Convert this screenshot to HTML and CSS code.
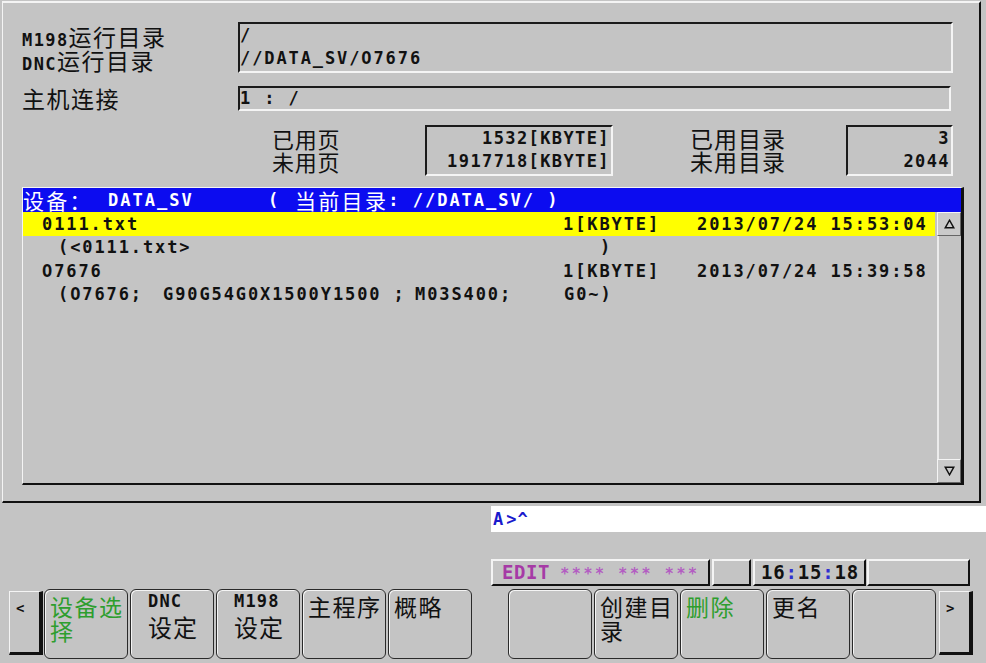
FILE: index.html
```html
<!DOCTYPE html>
<html lang="zh-CN">
<head>
  <meta charset="UTF-8">
  <meta name="viewport" content="width=device-width, initial-scale=1.0">
  <title>程序目录 - 设备选择</title>
  <link rel="stylesheet" href="styles.css">
</head>
<body>
  <div class="screen">
    <div class="main-panel">
      <!-- 运行目录 -->
      <div class="dir-row dir-row-tall">
        <div class="label">
          <div class="label-line"><span class="label-code">M198</span>运行目录</div>
          <div class="label-line"><span class="label-code">DNC</span>运行目录</div>
        </div>
        <div class="field field-tall mono">
          <div>/</div>
          <div>//DATA_SV/O7676</div>
        </div>
      </div>
      <div class="dir-row dir-row-host">
        <div class="label">主机连接</div>
        <div class="field field-host mono">1 : /</div>
      </div>

      <!-- 容量 -->
      <div class="stats">
        <div class="stat-label"><div>已用页</div><div>未用页</div></div>
        <div class="stat-box stat-box-wide mono"><div>1532[KBYTE]</div><div>1917718[KBYTE]</div></div>
        <div class="stat-label stat-label-dir"><div>已用目录</div><div>未用目录</div></div>
        <div class="stat-box stat-box-narrow mono"><div>3</div><div>2044</div></div>
      </div>

      <!-- 文件列表 -->
      <div class="file-list">
        <div class="list-head">
          <span class="head-cjk head-dev">设备：</span><span class="head-mono head-name">DATA_SV</span><span class="head-mono head-paren">(</span><span class="head-cjk">当前目录</span><span class="head-mono">: //DATA_SV/ )</span>
        </div>
        <div class="list-body">
          <div class="rows mono">
            <div class="row row-selected">
              <span class="col-name">0111.txt</span><span class="col-size">1[KBYTE]</span><span class="col-date">2013/07/24 15:53:04</span>
            </div>
            <div class="row row-note">
              <span class="note-wide">(&lt;0111.txt&gt;</span><span>)</span>
            </div>
            <div class="row">
              <span class="col-name">O7676</span><span class="col-size">1[KBYTE]</span><span class="col-date">2013/07/24 15:39:58</span>
            </div>
            <div class="row row-note">
              <span class="note-a">(O7676;</span><span class="note-b">G90G54G0X1500Y1500 ;</span><span class="note-c">M03S400;</span><span>G0~)</span>
            </div>
          </div>
          <div class="scrollbar">
            <div class="scroll-btn">
              <svg width="11" height="10" viewBox="0 0 11 10"><path d="M5.5 1.2 L9.8 8.8 H1.2 Z" fill="none" stroke="#111" stroke-width="1.4"/></svg>
            </div>
            <div class="scroll-track"></div>
            <div class="scroll-btn">
              <svg width="11" height="10" viewBox="0 0 11 10"><path d="M5.5 8.8 L9.8 1.2 H1.2 Z" fill="none" stroke="#111" stroke-width="1.4"/></svg>
            </div>
          </div>
        </div>
      </div>
    </div>

    <!-- 输入行 -->
    <div class="cmd-line mono"><span class="cmd-prompt">A</span>&gt;^</div>

    <!-- 状态栏 -->
    <div class="status-bar">
      <div class="status-cell status-mode"><span class="mode">EDIT</span><span class="stars">**** *** ***</span></div>
      <div class="status-cell status-small"></div>
      <div class="status-cell status-clock">16<span class="colon">:</span>15<span class="colon">:</span>18</div>
      <div class="status-cell status-rest"></div>
    </div>

    <!-- 软键 -->
    <div class="softkeys">
      <div class="nav-key" role="button">&lt;</div>
      <div class="key-group">
        <div class="softkey softkey-on" role="button">设备选择</div>
        <div class="softkey softkey-code" role="button"><span class="key-code">DNC</span><span class="key-text">设定</span></div>
        <div class="softkey softkey-code" role="button"><span class="key-code">M198</span><span class="key-text">设定</span></div>
        <div class="softkey" role="button">主程序</div>
        <div class="softkey" role="button">概略</div>
      </div>
      <div class="key-group key-group-right">
        <div class="softkey" role="button"></div>
        <div class="softkey" role="button">创建目录</div>
        <div class="softkey softkey-on" role="button">删除</div>
        <div class="softkey" role="button">更名</div>
        <div class="softkey" role="button"></div>
      </div>
      <div class="nav-key nav-key-right" role="button">&gt;</div>
    </div>
  </div>
</body>
</html>
```

FILE: styles.css
```css
body {
  margin: 0;
  background-color: #c4c4c4;
  font-family: "Noto Sans CJK SC", sans-serif;
  color: #111;
}

.screen {
  width: 986px;
  height: 663px;
  overflow: hidden;
  background-color: #c4c4c4;
}

.mono {
  font-family: "DejaVu Sans Mono", monospace;
  font-weight: bold;
  font-size: 17px;
  letter-spacing: 1.9px;
}

/* Raised and sunken edges */
.main-panel {
  box-sizing: border-box;
  width: 979px;
  height: 502px;
  margin: 1px 0 0 2px;
  padding: 19px 0 0 19px;
  border-top: 2px solid #f4f4f4;
  border-left: 1px solid #f4f4f4;
  border-right: 2px solid #111;
  border-bottom: 2px solid #111;
}

.field,
.stat-box {
  box-sizing: border-box;
  border-top: 2px solid #1a1a1a;
  border-left: 2px solid #1a1a1a;
  border-right: 2px solid #f4f4f4;
  border-bottom: 2px solid #f4f4f4;
}

/* Directory rows */
.dir-row {
  display: flex;
}

.label {
  width: 216px;
  font-size: 23px;
  letter-spacing: 1.5px;
}

.label-line {
  height: 24px;
  line-height: 24px;
  white-space: nowrap;
}

.label-code {
  font-family: "DejaVu Sans Mono", monospace;
  font-weight: bold;
  font-size: 17px;
  line-height: 1;
  letter-spacing: 1.4px;
}

.dir-row-tall {
  height: 51px;
}

.dir-row-tall .label {
  padding-top: 2px;
}

.field-tall {
  width: 715px;
  height: 51px;
  line-height: 23px;
}

.dir-row-host {
  margin-top: 13px;
  height: 25px;
}

.dir-row-host .label {
  line-height: 25px;
}

.field-host {
  width: 713px;
  height: 25px;
  line-height: 21px;
}

/* Memory usage */
.stats {
  display: flex;
  margin: 14px 0 0 250px;
  height: 51px;
}

.stat-label {
  width: 153px;
  padding-top: 2px;
  font-size: 22px;
  line-height: 23px;
  letter-spacing: 0.7px;
}

.stat-label-dir {
  width: 156px;
  margin-left: 77px;
  font-size: 23px;
  letter-spacing: 1px;
}

.stat-box {
  height: 51px;
  padding-right: 1px;
  text-align: right;
  line-height: 23px;
  letter-spacing: 1.4px;
}

.stat-box-wide {
  width: 188px;
}

.stat-box-narrow {
  width: 107px;
}

/* File list */
.file-list {
  box-sizing: border-box;
  width: 942px;
  height: 298px;
  margin-top: 11px;
  border-top: 1px solid #f4f4f4;
  border-left: 1px solid #f4f4f4;
  border-right: 3px solid #111;
  border-bottom: 2px solid #111;
}

.list-head {
  display: flex;
  height: 24px;
  line-height: 24px;
  background-color: #0c0cf0;
  color: #fff;
  white-space: pre;
}

.head-cjk {
  font-size: 21px;
  letter-spacing: 2.3px;
}

.head-mono {
  font-family: "DejaVu Sans Mono", monospace;
  font-weight: bold;
  font-size: 17px;
  letter-spacing: 2px;
}

.head-dev {
  width: 85px;
}

.head-name {
  width: 160px;
}

.head-paren {
  width: 27px;
}

.list-body {
  display: flex;
  height: 271px;
}

.rows {
  flex: 1;
}

.row {
  display: flex;
  height: 23.5px;
  line-height: 23.5px;
  white-space: pre;
}

.row-selected {
  height: 24px;
  line-height: 24px;
  margin-right: 2px;
  background-color: #ffff00;
}

.col-name {
  box-sizing: border-box;
  width: 540px;
  padding-left: 19px;
}

.col-size {
  width: 134px;
}

.row-note {
  padding-left: 35px;
}

.note-wide {
  width: 542px;
}

.note-a {
  width: 105px;
}

.note-b {
  width: 252px;
}

.note-c {
  width: 149px;
}

.scrollbar {
  display: flex;
  flex-direction: column;
  width: 24px;
}

.scroll-btn {
  box-sizing: border-box;
  display: flex;
  align-items: center;
  justify-content: center;
  height: 24px;
  background-color: #cacaca;
  border-top: 1px solid #f4f4f4;
  border-left: 1px solid #f4f4f4;
  border-right: 1px solid #666;
  border-bottom: 1px solid #666;
}

.scroll-track {
  flex: 1;
  border-left: 2px solid #ececec;
}

/* Input line and status bar */
.cmd-line {
  height: 26px;
  margin: 3px 0 0 491px;
  padding-left: 2px;
  background-color: #fff;
  color: #1a1acc;
  line-height: 26px;
  font-size: 17px;
  letter-spacing: 1px;
}

.cmd-prompt {
  margin-right: 2px;
}

.status-bar {
  display: flex;
  height: 27px;
  margin: 27px 0 0 491px;
}

.status-cell {
  box-sizing: border-box;
  height: 27px;
  border-top: 2px solid #f4f4f4;
  border-left: 2px solid #f4f4f4;
  border-right: 2px solid #111;
  border-bottom: 2px solid #111;
  font-family: "DejaVu Sans Mono", monospace;
  font-weight: bold;
  line-height: 23px;
  white-space: pre;
}

.status-mode {
  width: 219px;
  margin-right: 2px;
  padding-left: 9px;
}

.mode {
  color: #a63aa6;
  font-size: 19px;
  letter-spacing: 0.6px;
}

.stars {
  margin-left: 10px;
  color: #b35cc2;
  font-size: 15px;
  letter-spacing: 2.6px;
}

.status-small {
  width: 39px;
  margin-right: 2px;
}

.status-clock {
  width: 113px;
  margin-right: 1px;
  padding-left: 6px;
  font-size: 19px;
  letter-spacing: 0.8px;
}

.colon {
  color: #3030d0;
}

.status-rest {
  width: 103px;
}

/* Soft keys */
.softkeys {
  display: flex;
  height: 70px;
  margin-top: 3px;
  padding-left: 9px;
}

.nav-key {
  box-sizing: border-box;
  width: 34px;
  height: 64px;
  margin-top: 2px;
  padding: 9px 0 0 6px;
  border-top: 1px solid #f4f4f4;
  border-left: 1px solid #f4f4f4;
  border-right: 4px solid #111;
  border-bottom: 3px solid #111;
  font-family: "DejaVu Sans Mono", monospace;
  font-weight: bold;
  font-size: 14px;
  line-height: 14px;
  cursor: pointer;
}

.nav-key-right {
  margin-left: 3px;
}

.key-group {
  display: flex;
  gap: 2px;
  margin-left: 1px;
}

.key-group-right {
  margin-left: 36px;
}

.softkey {
  box-sizing: border-box;
  width: 84px;
  height: 70px;
  padding: 4px 0 0 5px;
  border: 1px solid #2a2a2a;
  border-radius: 6px;
  box-shadow: inset 1px 1px 0 #f4f4f4;
  font-size: 23px;
  line-height: 24px;
  letter-spacing: 1.5px;
  cursor: pointer;
}

.softkey-on {
  color: #2e9e2e;
}

.softkey-code {
  padding-left: 17px;
}

.key-code {
  display: block;
  font-family: "DejaVu Sans Mono", monospace;
  font-weight: bold;
  font-size: 17px;
  line-height: 14px;
  letter-spacing: 1.2px;
}

.key-text {
  display: block;
  margin-top: 6px;
  font-size: 24px;
  line-height: 26px;
  letter-spacing: 1px;
}
```
